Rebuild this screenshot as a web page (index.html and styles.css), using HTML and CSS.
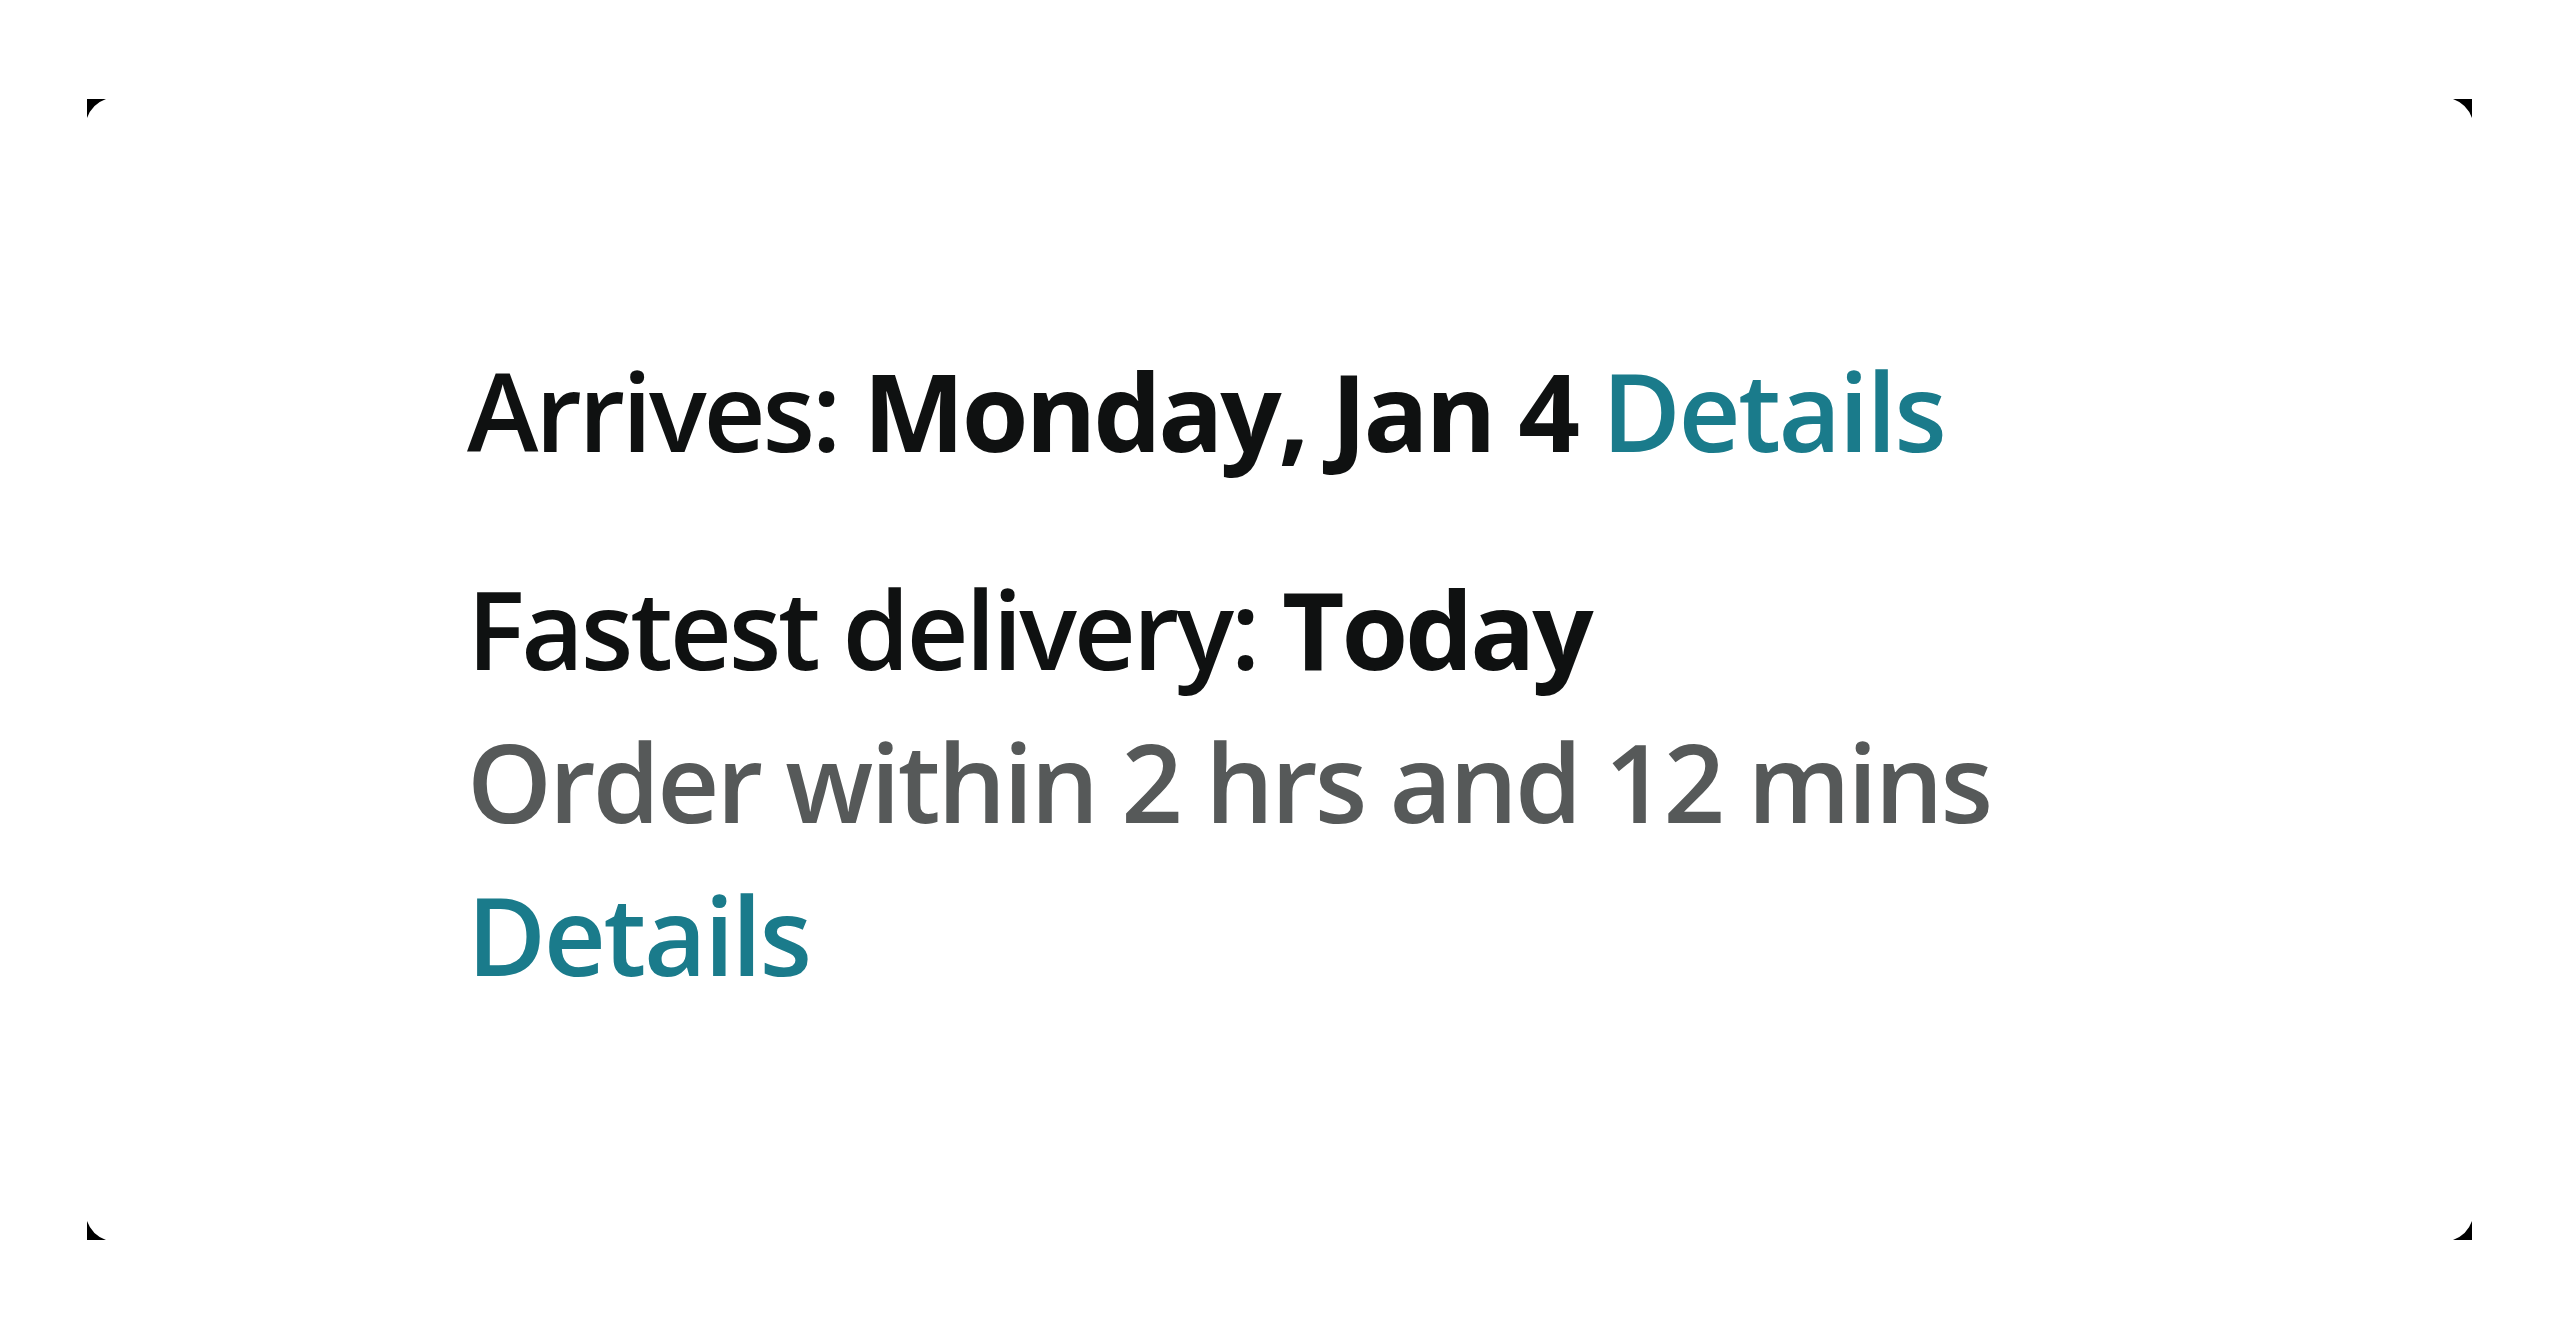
FILE: index.html
```html
<!DOCTYPE html>
<html>
<head>
<meta charset="utf-8">
<link rel="stylesheet" href="styles.css">
</head>
<body>
<div class="frame">
  <svg class="corner tl" viewBox="0 0 19 19"><path d="M0 0H19Q5 5 0 19Z"/></svg>
  <svg class="corner tr" viewBox="0 0 19 19"><path d="M0 0H19Q5 5 0 19Z"/></svg>
  <svg class="corner bl" viewBox="0 0 19 19"><path d="M0 0H19Q5 5 0 19Z"/></svg>
  <svg class="corner br" viewBox="0 0 19 19"><path d="M0 0H19Q5 5 0 19Z"/></svg>
  <div class="content">
    <div class="line arrives">Arrives: <b>Monday, Jan 4</b> <a class="link" href="#">Details</a></div>
    <div class="fastest">
      <div class="line">Fastest delivery: <b>Today</b></div>
      <div class="line muted">Order within 2 hrs and 12 mins</div>
      <div class="line"><a class="link" href="#">Details</a></div>
    </div>
  </div>
</div>
</body>
</html>
```
FILE: styles.css
```css
html, body {
  margin: 0;
  background: #ffffff;
}
body {
  padding: 99px 88px 0 87px;
  font-family: "Open Sans", "Noto Sans", sans-serif;
  color: #0f1111;
}
.frame {
  position: relative;
  height: 1141px;
}
.corner {
  position: absolute;
  width: 19px;
  height: 19px;
  fill: #000;
}
.tl { left: 0; top: 0; }
.tr { right: 0; top: 0; transform: scaleX(-1); }
.bl { left: 0; bottom: 0; transform: scaleY(-1); }
.br { right: 0; bottom: 0; transform: scale(-1, -1); }
.content {
  padding: 235px 0 0 380px;
}
.line {
  font-size: 108px;
  font-weight: 600;
  letter-spacing: -3.2px;
  line-height: 153px;
  white-space: nowrap;
}
.line b {
  font-weight: 700;
  letter-spacing: -3.2px;
}
.arrives {
  margin-bottom: 65px;
}
.muted {
  color: #565959;
  letter-spacing: -2.9px;
}
.link {
  color: #1a7b8b;
  text-decoration: none;
  letter-spacing: -2.4px;
}
```
